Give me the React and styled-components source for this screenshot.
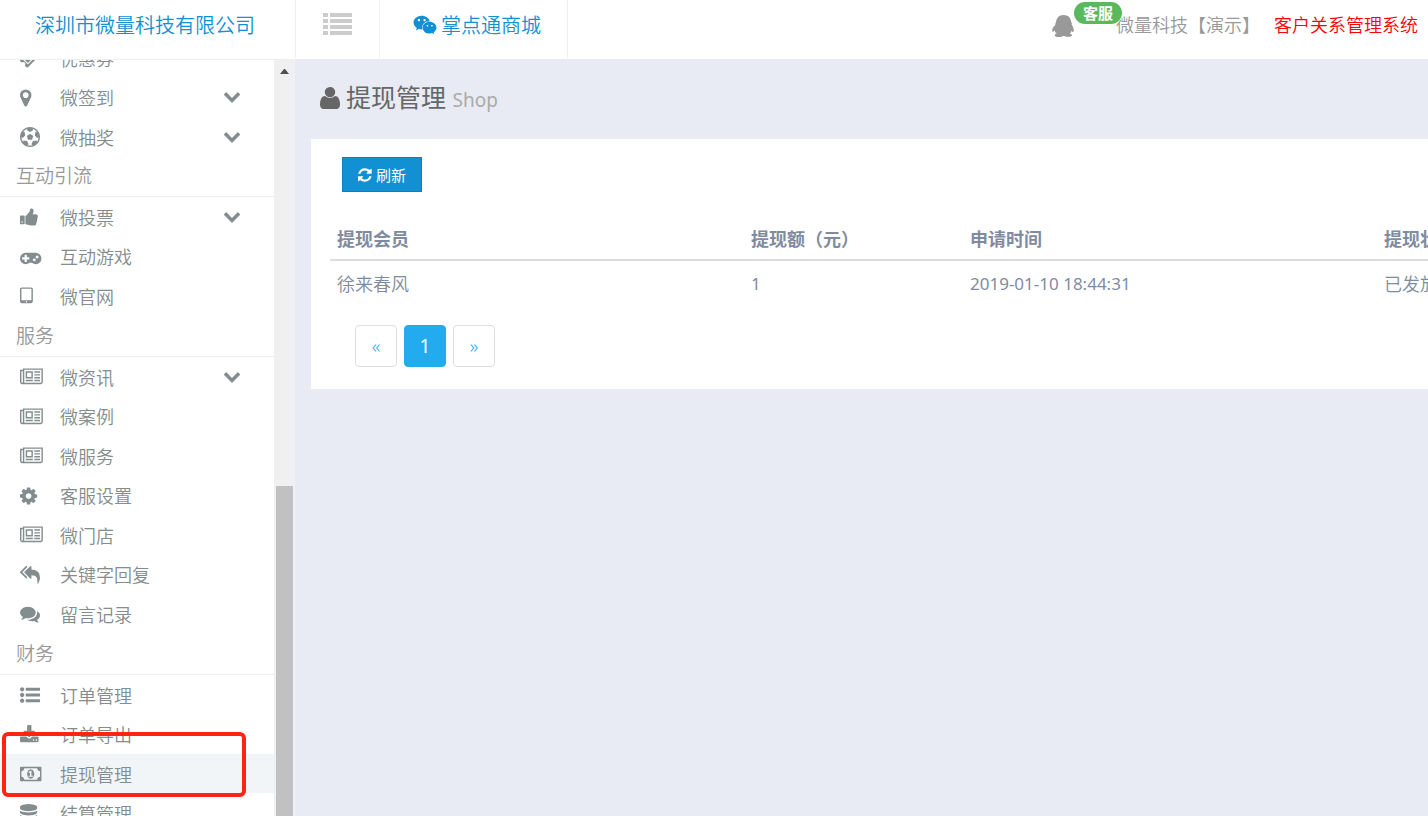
import React from 'react'
import styled, {createGlobalStyle} from 'styled-components'
import {FaWeixin} from 'react-icons/fa'

// x is the left edge of the glyph inside the 1792 unit grid, w its width when it is not square
const glyphs = {
    ticket: {x: 64, d: 'M1024 452l316 316-572 572-316-316zm-211 979l618-618q19-19 19-45t-19-45l-362-362q-18-18-45-18t-45 18l-618 618q-19 19-19 45t19 45l362 362q18 18 45 18t45-18zm889-637l-907 908q-37 37-90.5 37t-90.5-37l-126-126q56-56 56-136t-56-136-136-56-136 56l-125-126q-37-37-37-90.5t37-90.5l907-906q37-37 90.5-37t90.5 37l125 125q-56 56-56 136t56 136 136 56 136-56l126 125q37 37 37 90.5t-37 90.5z'},
    marker: {x: 384, d: 'M1152 640q0-106-75-181t-181-75-181 75-75 181 75 181 181 75 181-75 75-181zm256 0q0 109-33 179l-364 774q-16 33-47.5 52t-67.5 19-67.5-19-46.5-52l-365-774q-33-70-33-179 0-212 150-362t362-150 362 150 150 362z'},
    football: {x: 0, d: 'M609 816l287-208 287 208-109 336h-355zm287-816q182 0 348 71t286 191 191 286 71 348-71 348-191 286-286 191-348 71-348-71-286-191-191-286-71-348 71-348 191-286 286-191 348-71zm619 1350q149-203 149-454v-3l-102 89-240-224 63-323 134 12q-150-206-389-282l53 124-287 159-287-159 53-124q-239 76-389 282l135-12 62 323-240 224-102-89v3q0 251 149 454l30-132 326 40 139 298-116 69q117 39 240 39t240-39l-116-69 139-298 326-40z'},
    thumb: {x: 64, d: 'M320 1344q0-26-19-45t-45-19q-27 0-45.5 19t-18.5 45q0 27 18.5 45.5t45.5 18.5q26 0 45-18.5t19-45.5zm160-512v640q0 26-19 45t-45 19h-288q-26 0-45-19t-19-45v-640q0-26 19-45t45-19h288q26 0 45 19t19 45zm1184 0q0 86-55 149 15 44 15 76 3 76-43 137 17 56 0 117-15 57-54 94 9 112-49 181-64 76-197 78h-129q-66 0-144-15.5t-121.5-29-120.5-39.5q-123-43-158-44-26-1-45-19.5t-19-44.5v-641q0-25 18-43.5t43-20.5q24-2 76-59t101-121q68-87 101-120 18-18 31-48t17.5-48.5 13.5-60.5q7-39 12.5-61t19.5-52 34-50q19-19 45-19 46 0 82.5 10.5t60 26 40 40.5 24 45 12 50 5 45 .5 39q0 38-9.5 76t-19 60-27.5 56q-3 6-10 18t-11 22-8 24h277q78 0 135 57t57 135z'},
    gamepad: {x: 0, d: 'M832 1088v-128q0-14-9-23t-23-9h-192v-192q0-14-9-23t-23-9h-128q-14 0-23 9t-9 23v192h-192q-14 0-23 9t-9 23v128q0 14 9 23t23 9h192v192q0 14 9 23t23 9h128q14 0 23-9t9-23v-192h192q14 0 23-9t9-23zm576 64q0-53-37.5-90.5t-90.5-37.5-90.5 37.5-37.5 90.5 37.5 90.5 90.5 37.5 90.5-37.5 37.5-90.5zm256-256q0-53-37.5-90.5t-90.5-37.5-90.5 37.5-37.5 90.5 37.5 90.5 90.5 37.5 90.5-37.5 37.5-90.5zm256 128q0 212-150 362t-362 150q-192 0-338-128h-220q-146 128-338 128-212 0-362-150t-150-362 150-362 362-150h896q212 0 362 150t150 362z'},
    tablet: {x: 320, d: 'M960 1408q0-26-19-45t-45-19-45 19-19 45 19 45 45 19 45-19 19-45zm384-160v-960q0-13-9.5-22.5t-22.5-9.5h-832q-13 0-22.5 9.5t-9.5 22.5v960q0 13 9.5 22.5t22.5 9.5h832q13 0 22.5-9.5t9.5-22.5zm128-960v1088q0 66-47 113t-113 47h-832q-66 0-113-47t-47-113v-1088q0-66 47-113t113-47h832q66 0 113 47t47 113z'},
    news: {x: 0, d: 'M1024 512h-384v384h384v-384zm128 640v128h-640v-128h640zm0-768v640h-640v-640h640zm640 768v128h-512v-128h512zm0-256v128h-512v-128h512zm0-256v128h-512v-128h512zm0-256v128h-512v-128h512zm-1536 960v-960h-128v960q0 26 19 45t45 19 45-19 19-45zm1664 0v-1088h-1536v1088q0 33-11 64h1483q26 0 45-19t19-45zm128-1216v1216q0 80-56 136t-136 56h-1664q-80 0-136-56t-56-136v-1088h256v-128h1792z'},
    cog: {x: 128, d: 'M1152 896q0-106-75-181t-181-75-181 75-75 181 75 181 181 75 181-75 75-181zm512-109v222q0 12-8 23t-20 13l-185 28q-19 54-39 91 35 50 107 138 10 12 10 25t-9 23q-27 37-99 108t-94 71q-12 0-26-9l-138-108q-44 23-91 38-16 136-29 186-7 28-36 28h-222q-14 0-24.5-8.5t-11.5-21.5l-28-184q-49-16-90-37l-141 107q-10 9-25 9-14 0-25-11-126-114-165-168-7-10-7-23 0-12 8-23 15-21 51-66.5t54-70.5q-27-50-41-99l-183-27q-13-2-21-12.5t-8-23.5v-222q0-12 8-23t19-13l186-28q14-46 39-92-40-57-107-138-10-12-10-24 0-10 9-23 26-36 98.5-107.5t94.5-71.5q13 0 26 10l138 107q44-23 91-38 16-136 29-186 7-28 36-28h222q14 0 24.5 8.5t11.5 21.5l28 184q49 16 90 37l142-107q9-9 24-9 13 0 25 10 129 119 165 170 7 8 7 22 0 12-8 23-15 21-51 66.5t-54 70.5q26 50 41 98l183 28q13 2 21 12.5t8 23.5z'},
    reply: {x: 0, d: 'M640 1082v70q0 42-39 59-13 5-25 5-27 0-45-19l-512-512q-19-19-19-45t19-45l512-512q29-31 70-14 39 17 39 59v69l-397 398q-19 19-19 45t19 45zm1152 58q0 58-17 133.5t-38.5 138-48 125-40.5 90.5l-20 40q-8 17-28 17-6 0-9-1-25-8-23-34 43-400-106-565-64-71-170.5-110.5t-267.5-52.5v251q0 42-39 59-13 5-25 5-27 0-45-19l-512-512q-19-19-19-45t19-45l512-512q29-31 70-14 39 17 39 59v262q411 28 599 221 169 173 169 509z'},
    comments: {x: 0, d: 'M1408 768q0 139-94 257t-256.5 186.5-353.5 68.5q-86 0-176-16-124 88-278 128-36 9-86 16h-3q-11 0-20.5-8t-11.5-21q-1-3-1-6.5t.5-6.5 2-6l2.5-5 3.5-5.5 4-5 4.5-5 4-4.5q5-6 23-25t26-29.5 22.5-29 25-38.5 20.5-44q-124-72-195-177t-71-224q0-139 94-257t256.5-186.5 353.5-68.5 353.5 68.5 256.5 186.5 94 257zm384 256q0 120-71 224.5t-195 176.5q10 24 20.5 44t25 38.5 22.5 29 26 29.5 23 25q1 1 4 4.5t4.5 5 4 5 3.5 5.5l2.5 5 2 6 .5 6.5-1 6.5q-3 14-13 22t-22 7q-50-7-86-16-154-40-278-128-90 16-176 16-271 0-472-132 58 4 88 4 161 0 309-45t264-129q125-92 192-212t67-254q0-77-23-152 129 71 204 178t75 230z'},
    listUl: {x: 0, d: 'M384 1408q0 80-56 136t-136 56-136-56-56-136 56-136 136-56 136 56 56 136zm0-512q0 80-56 136t-136 56-136-56-56-136 56-136 136-56 136 56 56 136zm1408 416v192q0 13-9.5 22.5t-22.5 9.5h-1216q-13 0-22.5-9.5t-9.5-22.5v-192q0-13 9.5-22.5t22.5-9.5h1216q13 0 22.5 9.5t9.5 22.5zm-1408-928q0 80-56 136t-136 56-136-56-56-136 56-136 136-56 136 56 56 136zm1408 416v192q0 13-9.5 22.5t-22.5 9.5h-1216q-13 0-22.5-9.5t-9.5-22.5v-192q0-13 9.5-22.5t22.5-9.5h1216q13 0 22.5 9.5t9.5 22.5zm0-512v192q0 13-9.5 22.5t-22.5 9.5h-1216q-13 0-22.5-9.5t-9.5-22.5v-192q0-13 9.5-22.5t22.5-9.5h1216q13 0 22.5 9.5t9.5 22.5z'},
    download: {x: 64, d: 'M1344 1344q0-26-19-45t-45-19-45 19-19 45 19 45 45 19 45-19 19-45zm256 0q0-26-19-45t-45-19-45 19-19 45 19 45 45 19 45-19 19-45zm128-224v320q0 40-28 68t-68 28h-1472q-40 0-68-28t-28-68v-320q0-40 28-68t68-28h465l135 136q58 56 136 56t136-56l136-136h464q40 0 68 28t28 68zm-325-569q17 41-14 70l-448 448q-18 19-45 19t-45-19l-448-448q-31-29-14-70 17-39 59-39h256v-448q0-26 19-45t45-19h256q26 0 45 19t19 45v448h256q42 0 59 39z'},
    money: {x: 0, d: 'M768 1152h384v-96h-128v-448h-114l-148 137 77 80q42-37 55-57h2v288h-128v96zm512-256q0 70-21 142t-59.5 134-101.5 101-138 39-138-39-101.5-101-59.5-134-21-142 21-142 59.5-134 101.5-101 138-39 138 39 101.5 101 59.5 134 21 142zm512 256v-512q-106 0-181-75t-75-181h-1152q0 106-75 181t-181 75v512q106 0 181 75t75 181h1152q0-106 75-181t181-75zm128-832v1152q0 26-19 45t-45 19h-1792q-26 0-45-19t-19-45v-1152q0-26 19-45t45-19h1792q26 0 45 19t19 45z'},
    database: {x: 128, d: 'M896 768q237 0 443-43t325-127v170q0 69-103 128t-280 93.5-385 34.5-385-34.5-280-93.5-103-128v-170q119 84 325 127t443 43zm0 768q237 0 443-43t325-127v170q0 69-103 128t-280 93.5-385 34.5-385-34.5-280-93.5-103-128v-170q119 84 325 127t443 43zm0-384q237 0 443-43t325-127v170q0 69-103 128t-280 93.5-385 34.5-385-34.5-280-93.5-103-128v-170q119 84 325 127t443 43zm0-1152q208 0 385 34.5t280 93.5 103 128v128q0 69-103 128t-280 93.5-385 34.5-385-34.5-280-93.5-103-128v-128q0-69 103-128t280-93.5 385-34.5z'},
    chevron: {x: 0, d: 'M1683 808l-742 741q-19 19-45 19t-45-19l-742-741q-19-19-19-45.5t19-45.5l166-165q19-19 45-19t45 19l531 531 531-531q19-19 45-19t45 19l166 165q19 19 19 45.5t-19 45.5z'},
    refresh: {x: 128, d: 'M1639 1056q0 5-1 7-64 268-268 434.5t-478 166.5q-146 0-282.5-55t-243.5-157l-129 129q-19 19-45 19t-45-19-19-45v-448q0-26 19-45t45-19h448q26 0 45 19t19 45-19 45l-137 137q71 66 161 102t187 36q134 0 250-65t186-179q11-17 53-117 8-23 30-23h192q13 0 22.5 9.5t9.5 22.5zm25-800v448q0 26-19 45t-45 19h-448q-26 0-45-19t-19-45 19-45l138-138q-148-137-349-137-134 0-250 65t-186 179q-11 17-53 117-8 23-30 23h-199q-13 0-22.5-9.5t-9.5-22.5v-7q65-268 270-434.5t480-166.5q146 0 284 55.5t245 156.5l130-129q19-19 45-19t45 19 19 45z'},
    user: {x: 256, w: 1280, d: 'M1536 1399q0 109-62.5 187t-150.5 78h-854q-88 0-150.5-78t-62.5-187q0-85 8.5-160.5t31.5-152 58.5-131 94-89 134.5-34.5q131 128 313 128t313-128q76 0 134.5 34.5t94 89 58.5 131 31.5 152 8.5 160.5zM1232 576q0 133-98 232t-238 99-238-99-98-232 98-226 238-94 238 94 98 226z'},
    qq: {x: 0, d: 'M270 806q-8-19-8-52 0-20 11-49t24-45q-1-22 7.5-53t22.5-43q0-139 92.5-288.5t217.5-209.5q139-66 324-66 133 0 266 55 49 21 90 48t71 56 55 68 42 74 32.5 84.5 25.5 89.5 22 98l1 5q55 83 55 150 0 14-9 40t-9 38q0 1 1.5 3.5t3.5 5 2 3.5q77 114 120.5 214.5t43.5 208.5q0 43-19.5 100t-55.5 57q-9 0-19.5-7.5t-19-17.5-19-26-16-26-13.5-26-9-17.5q-1-1-3-1l-5 4q-59 154-132 223 20 20 61.5 38.5t69 41.5 35.5 65q-2 4-4 16t-7 18q-64 97-302 97-53 0-110.5-9t-98-20-104.5-30q-15-5-23-7-14-4-46-4.5t-40-1.5q-41 45-127.5 65t-168.5 20q-35 0-69-1.5t-93-9-101-20.5-74.5-40-32.5-64q0-40 10-59.5t41-48.5q11-2 40.5-13t49.5-12q4 0 14-2 2-2 2-4l-2-3q-48-11-108-105.5t-73-156.5l-5-3q-4 0-12 20-18 41-54.5 74.5t-77.5 37.5h-1q-4 0-6-4.5t-5-5.5q-23-54-23-100 0-275 252-466z'},
}

const menu = [
    {
        title: null,
        items: [
            {icon: 'ticket', label: '优惠券'},
            {icon: 'marker', label: '微签到', open: true},
            {icon: 'football', label: '微抽奖', open: true},
        ],
    },
    {
        title: '互动引流',
        items: [
            {icon: 'thumb', label: '微投票', open: true},
            {icon: 'gamepad', label: '互动游戏'},
            {icon: 'tablet', label: '微官网'},
        ],
    },
    {
        title: '服务',
        items: [
            {icon: 'news', label: '微资讯', open: true},
            {icon: 'news', label: '微案例'},
            {icon: 'news', label: '微服务'},
            {icon: 'cog', label: '客服设置'},
            {icon: 'news', label: '微门店'},
            {icon: 'reply', label: '关键字回复'},
            {icon: 'comments', label: '留言记录'},
        ],
    },
    {
        title: '财务',
        items: [
            {icon: 'listUl', label: '订单管理'},
            {icon: 'download', label: '订单导出'},
            {icon: 'money', label: '提现管理', active: true},
            {icon: 'database', label: '结算管理'},
        ],
    },
]

const rows = [
    {member: '徐来春风', amount: '1', time: '2019-01-10 18:44:31', status: '已发放'},
]

const Icon = ({name, size = 20}) => {
    const {x, w = 1792, d} = glyphs[name];

    return (
        <Glyph viewBox={`${x} 0 ${w} 1792`} width={size * w / 1792} height={size} aria-hidden="true">
            <path d={d} />
        </Glyph>
    )
}

const ListIcon = () => (
    <svg width="29" height="22" viewBox="0 0 29 22" fill="currentColor" aria-hidden="true">
        {[0, 6, 12, 18].map((y) => (
            <React.Fragment key={y}>
                <rect x="0" y={y} width="5" height="4" />
                <rect x="7" y={y} width="22" height="4" />
            </React.Fragment>
        ))}
    </svg>
)

const Sidebar = () => (
    <Aside>
        <Nav>
            {menu.map((group, i) => (
                <React.Fragment key={i}>
                    {group.title && <GroupTitle>{group.title}</GroupTitle>}
                    <Group>
                        {group.items.map((item) => (
                            <Item key={item.label} $active={item.active}>
                                <ItemLink href="#">
                                    <IconSlot><Icon name={item.icon} /></IconSlot>
                                    <ItemLabel>{item.label}</ItemLabel>
                                    {item.open && <Arrow><Icon name="chevron" size={18} /></Arrow>}
                                </ItemLink>
                                {item.active && <Marker />}
                            </Item>
                        ))}
                    </Group>
                </React.Fragment>
            ))}
        </Nav>
        <ScrollTrack>
            <ScrollArrow viewBox="0 0 9 5" aria-hidden="true">
                <path d="M4 0h1l4 5H0z" />
            </ScrollArrow>
            <ScrollThumb />
        </ScrollTrack>
    </Aside>
)

const App = () => {
    const [page, setPage] = React.useState(1);

    return (
        <Page>
            <GlobalStyle />
            <Header>
                <Brand href="#">深圳市微量科技有限公司</Brand>
                <Toggle type="button" aria-label="菜单"><ListIcon /></Toggle>
                <Mall href="#"><FaWeixin size={24} />掌点通商城</Mall>
                <HeaderRight>
                    <Service href="#">
                        <Icon name="qq" size={22} />
                        <Badge>客服</Badge>
                    </Service>
                    <Account href="#">微量科技【演示】</Account>
                    <Crm href="#">客户关系管理系统</Crm>
                </HeaderRight>
            </Header>
            <Body>
                <Sidebar />
                <Main>
                    <Title>
                        <Icon name="user" size={28} />
                        <span>提现管理 <small>Shop</small></span>
                    </Title>
                    <Panel>
                        <Refresh type="button"><Icon name="refresh" size={16} />刷新</Refresh>
                        <Table>
                            <colgroup>
                                <Col $w={414} />
                                <Col $w={219} />
                                <Col $w={414} />
                                <Col $w={219} />
                            </colgroup>
                            <thead>
                                <tr>
                                    <th>提现会员</th>
                                    <th>提现额（元）</th>
                                    <th>申请时间</th>
                                    <th>提现状态</th>
                                </tr>
                            </thead>
                            <tbody>
                                {rows.map((row) => (
                                    <tr key={row.time}>
                                        <td>{row.member}</td>
                                        <td><Num>{row.amount}</Num></td>
                                        <td><Num>{row.time}</Num></td>
                                        <td>{row.status}</td>
                                    </tr>
                                ))}
                            </tbody>
                        </Table>
                        <Pager>
                            <PageButton type="button" onClick={() => setPage(1)}>«</PageButton>
                            <PageButton type="button" $active={page === 1}>1</PageButton>
                            <PageButton type="button">»</PageButton>
                        </Pager>
                    </Panel>
                </Main>
            </Body>
        </Page>
    )
}

const GlobalStyle = createGlobalStyle`
    * {
        box-sizing: border-box;
    }
    body {
        margin: 0;
        background: #e8ebf3;
        font-family: "Noto Sans", "Noto Sans CJK SC", sans-serif;
        font-weight: 350;
    }
    a {
        color: inherit;
        text-decoration: none;
    }
    button {
        font: inherit;
        cursor: pointer;
    }
    ul {
        margin: 0;
        padding: 0;
        list-style: none;
    }
`
const Page = styled.div`
    display: flex;
    flex-direction: column;
    height: 100vh;
    overflow: hidden;
`
const Header = styled.header`
    display: flex;
    flex: none;
    height: 59px;
    padding-bottom: 1px;
    background: #fff;
    color: #1190d4;
    font-size: 20px;
    line-height: 52px;
    white-space: nowrap;
`
const Brand = styled.a`
    width: 296px;
    padding-left: 35px;
    border-right: 1px solid #eee;
`
const Toggle = styled.button`
    display: flex;
    justify-content: center;
    width: 84px;
    padding: 13px 0 0;
    border: 0;
    border-right: 1px solid #eee;
    background: none;
    color: #ccc;
`
const Mall = styled.a`
    display: flex;
    gap: 4px;
    width: 188px;
    padding-left: 33px;
    border-right: 1px solid #eee;
    svg {
        margin-top: 13px;
    }
`
const HeaderRight = styled.div`
    display: flex;
    margin-left: auto;
    padding-right: 10px;
    font-size: 18px;
    line-height: 50px;
`
const Service = styled.a`
    position: relative;
    padding-top: 15px;
    margin-right: 42px;
    color: #999;
    line-height: 22px;
    svg {
        display: block;
    }
`
const Badge = styled.span`
    position: absolute;
    top: 2px;
    left: 22px;
    padding: 0 9px;
    border-radius: 11px;
    background: #5cb85c;
    color: #fff;
    font-size: 15px;
    font-weight: 700;
`
const Account = styled.a`
    margin-right: 14px;
    color: #999;
`
const Crm = styled.a`
    color: #f00;
`
const Body = styled.div`
    display: flex;
    flex: 1;
    min-height: 0;
`
const Aside = styled.aside`
    display: flex;
    flex: none;
    width: 295px;
    border-top: 1px solid #eee;
    background: #fff;
    overflow: hidden;
`
/* the menu is scrolled down inside the sidebar */
const Nav = styled.nav`
    flex: 1;
    margin-top: -23px;
    color: #848d8d;
`
const Group = styled.ul`
    padding-bottom: 2px;
    &:first-child {
        padding: 1px 0;
    }
`
const GroupTitle = styled.div`
    height: 40px;
    padding-left: 16px;
    border-bottom: 1px solid #eee;
    color: #999;
    font-size: 19px;
    line-height: 38px;
`
const Item = styled.li`
    position: relative;
    height: 39px;
    background: ${({$active}) => $active ? '#f1f5f8' : 'none'};
    &:nth-child(even) {
        height: 40px;
    }
`
const ItemLink = styled.a`
    display: flex;
    align-items: center;
    height: 100%;
    padding: 0 33px 0 20px;
    font-size: 18px;
`
const IconSlot = styled.span`
    display: flex;
    width: 40px;
    padding-top: 1px;
`
const ItemLabel = styled.span`
    flex: 1;
`
const Arrow = styled.span`
    display: flex;
    padding-bottom: 2px;
`
const Marker = styled.span`
    position: absolute;
    top: -22px;
    left: 2px;
    width: 244px;
    height: 65px;
    border: 4px solid #ff2314;
    border-radius: 6px;
    pointer-events: none;
    z-index: 1;
`
const ScrollTrack = styled.div`
    display: flex;
    flex-direction: column;
    align-items: center;
    width: 21px;
    background: #f0f0f0;
`
const ScrollArrow = styled.svg`
    width: 9px;
    height: 5px;
    margin-top: 9px;
    fill: #505050;
`
const ScrollThumb = styled.div`
    flex: 1;
    width: 17px;
    margin-top: 412px;
    background: #c1c1c1;
`
const Glyph = styled.svg`
    flex: none;
    fill: currentColor;
    overflow: visible;
`
const Main = styled.main`
    flex: 1;
    min-width: 0;
    padding: 18px 0 0 16px;
`
const Title = styled.h1`
    display: flex;
    align-items: center;
    gap: 6px;
    margin: 0 0 22px;
    padding-left: 9px;
    color: #666;
    font-size: 25px;
    font-weight: 400;
    line-height: 40px;
    small {
        color: #aaa;
        font-size: 19px;
        line-height: 1;
    }
`
const Panel = styled.section`
    padding: 18px 0 22px 19px;
    background: #fff;
    overflow: hidden;
`
const Refresh = styled.button`
    display: flex;
    align-items: center;
    gap: 2px;
    height: 35px;
    margin: 0 0 27px 12px;
    padding: 0 15px;
    border: 1px solid #0d7fbd;
    background: #1190d4;
    color: #fff;
    font-size: 15px;
    font-weight: 400;
`
const Table = styled.table`
    width: 1266px;
    table-layout: fixed;
    border-collapse: collapse;
    color: #7f8c9f;
    font-size: 18px;
    line-height: 26px;
    text-align: left;
    th {
        padding: 7px;
        border-bottom: 2px solid #ddd;
        font-weight: 700;
    }
    td {
        padding: 9px 7px 10px;
    }
`
const Col = styled.col`
    width: ${({$w}) => $w}px;
`
const Num = styled.span`
    font-size: 17px;
    font-weight: 400;
`
const Pager = styled.div`
    display: flex;
    gap: 7px;
    margin: 18px 0 0 25px;
`
const PageButton = styled.button`
    width: 42px;
    height: 42px;
    padding: 0;
    border: 1px solid ${({$active}) => $active ? '#23abf0' : '#ddd'};
    border-radius: 4px;
    background: ${({$active}) => $active ? '#23abf0' : '#fff'};
    color: ${({$active}) => $active ? '#fff' : '#23abf0'};
    font-size: 19px;
    font-weight: ${({$active}) => $active ? 400 : 300};
`
export default App
